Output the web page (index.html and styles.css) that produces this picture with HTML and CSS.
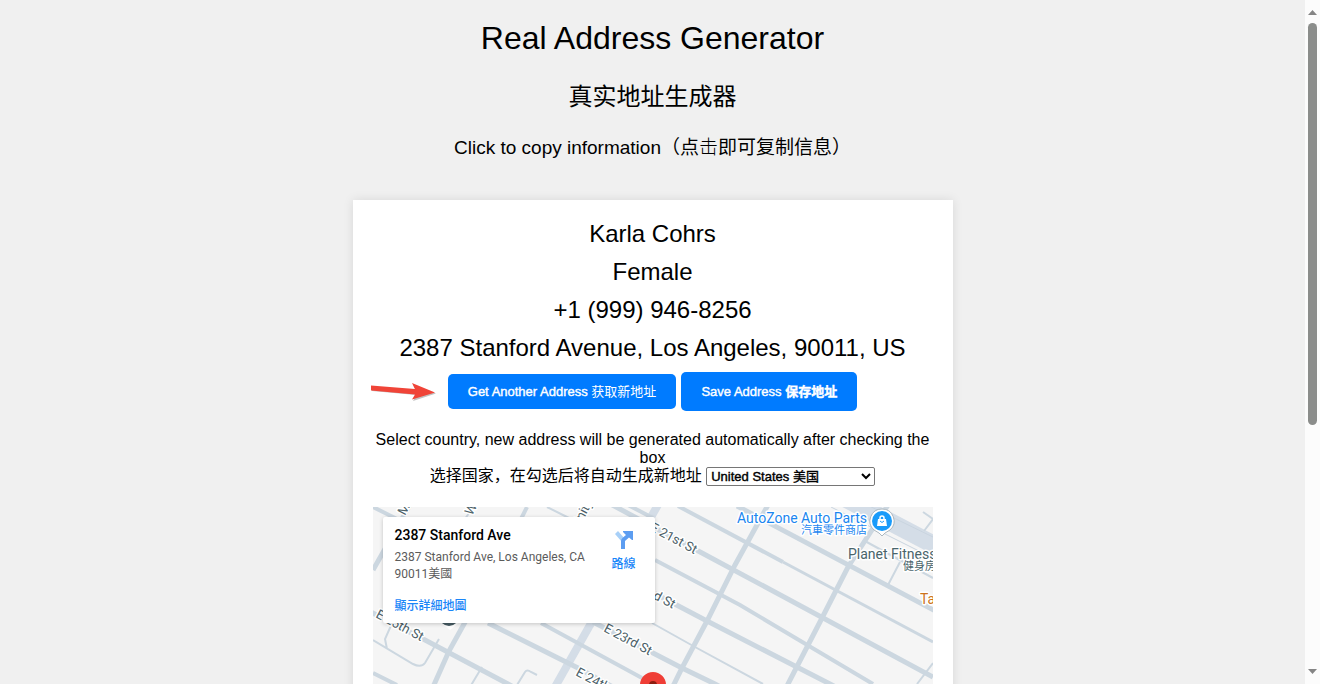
FILE: index.html
```html
<!DOCTYPE html>
<html lang="zh-CN">
<head>
<meta charset="utf-8">
<title>Real Address Generator</title>
<link rel="stylesheet" href="styles.css">
</head>
<body>
<main class="page">
  <h1 class="title">Real Address Generator</h1>
  <h2 class="subtitle">真实地址生成器</h2>
  <h3 class="hint">Click to copy information（点<span class="light">击</span>即可复制信息）</h3>
  <section class="card">
    <p class="info">Karla Cohrs</p>
    <p class="info">Female</p>
    <p class="info">+1 (999) 946-8256</p>
    <p class="info">2387 Stanford Avenue, Los Angeles, 90011, US</p>
    <div class="actions">
      <svg class="arrow" width="68" height="22" viewBox="0 0 68 22" aria-hidden="true">
        <path d="M2 6L46 10L43 4L66 12.500L43 20L46 14L2 10Z" fill="#999" opacity=".6"/>
        <path d="M1 4.500L45 8L42 2L65 11.500L42 18.500L45 13.500L1 9.500Z" fill="#f04438"/>
      </svg>
      <button class="btn" type="button">Get Another Address <span class="thin">获取新地址</span></button>
      <button class="btn btn-save" type="button">Save Address <b>保存地址</b></button>
    </div>
    <div class="country">
      <label for="country">Select country, new address will be generated automatically after checking the box<br>选择国家，在勾选后将自动生成新地址</label>
      <select id="country" class="select"><option>United States 美国</option></select>
    </div>
    <div class="map">
      <svg class="streets" width="560" height="240" viewBox="0 0 560 240">
        <g fill="none" stroke="#ccd7e0">
          <path stroke="#d4dde7" stroke-width="18" d="M462 -14L565 40"/>
          <path stroke="#c9d4df" stroke-width="1" d="M458 0L560 51M488 -5L560 30"/>
          <path stroke="#d4dde7" stroke-width="8" d="M286 -4L182 180L150 240"/>
          <path stroke-width="5" d="M364 -1L570 108M230 -7L329 46L560 170M220 54L334 114L457 177L570 237M220 115L309 161L342 177L460 240M115 116L205 161L350 240M-4 104L52 133L135 177L250 240"/>
          <path stroke-width="5" d="M395 -2L362 58L334 114L309 161L270 240M515 -2L475 60L449 111L415 177L384 240M96 108L76 144L60 180M0 63L38 -4"/>
          <path stroke-width="4" d="M305 -1L410 55M282 53L367 98L500 177M0 166L24 178M168 116L269 171M0 0L24 12M154 0L147 14M255 -2L280 11"/>
          <path stroke-width="3" d="M410 55L560 135"/>
          <path stroke-width="2" d="M279 116L322 140L390 177M527 55L515 78M490 33L560 71M560 156L544 177M550 5L560 12L551 24M0 133L40 157Q48 161 52 156L66 132M20 114L12 132L14 142M109 160L97 180M144 178L152 165Q154 162 158 165L164 168M174 0L196 11M100 0L92 12"/>
        </g>
        <g class="street-label">
          <text transform="translate(276 23) rotate(28)">E 21st St</text>
          <text transform="translate(251 76) rotate(28)">E 22nd St</text>
          <text transform="translate(230 124) rotate(28)">E 23rd St</text>
          <text transform="translate(202 168) rotate(28)">E 24th St</text>
          <text transform="translate(2 110) rotate(28)">E 25th St</text>
          <text transform="translate(32 9) rotate(-62)">Maple Ave</text>
          <text transform="translate(99 9) rotate(-62)">Wall St</text>
          <text transform="translate(203 27) rotate(-62)">Trinity St</text>
        </g>
        <path d="M67 115L77 123L87 115" fill="#fff"/><circle cx="76" cy="109" r="10" fill="#465b63"/>
        <g class="poi" text-anchor="end">
          <text x="494" y="16" fill="#1a86f0">AutoZone Auto Parts</text>
          <text x="494" y="27" class="poi-cjk" fill="#1a86f0">汽車零件商店</text>
        </g>
        <g class="poi">
          <text x="475" y="52" fill="#49646b">Planet Fitness</text>
          <text x="530" y="63" class="poi-cjk" fill="#49646b">健身房</text>
          <text x="547" y="97" fill="#cc731b">Tacos</text>
        </g>
        <path d="M509 2A12 12 0 0 1 517 23Q511 26 509 29Q507 26 501 23A12 12 0 0 1 509 2Z" fill="#fff" stroke="#aeb8bf" stroke-width="1"/>
        <circle cx="509" cy="14" r="10" fill="#1a9bfa"/>
        <path d="M505 12H513L514 19H504Z" fill="#fff"/>
        <path d="M507 12V11A2 2 0 0 1 511 11V12" fill="none" stroke="#fff" stroke-width="1.500"/>
        <path d="M507 14Q509 17 511 14" fill="none" stroke="#1a9bfa"/>
        <path d="M280 165A13 13 0 0 1 293 178C293 188 280 190 280 208C280 190 267 188 267 178A13 13 0 0 1 280 165Z" fill="#ef3e36"/>
        <circle cx="280" cy="178" r="4" fill="#8c1d10"/>
      </svg>
      <div class="place">
        <div class="place-text">
          <strong class="place-name">2387 Stanford Ave</strong>
          <p class="place-address">2387 Stanford Ave, Los Angeles, CA 90011美國</p>
          <a class="map-link" href="#">顯示詳細地圖</a>
        </div>
        <a class="directions" href="#">
          <svg width="20" height="20" viewBox="0 0 20 20" aria-hidden="true">
            <path d="M1 4L4 1L11 9L8 12Z" fill="#a8d0f8"/>
            <path d="M7 19V11Q7 9 9 7.500L12 5L9 2V1H19V10H18L15 7.500L11 11V19Z" fill="#5c9df1"/>
          </svg>
          <span>路線</span>
        </a>
      </div>
    </div>
  </section>
</main>
<div class="scrollbar" aria-hidden="true">
  <svg width="9" height="5" viewBox="0 0 9 5"><path d="M0 5L4.500 0L9 5Z" fill="#858585"/></svg>
  <div class="track"><div class="thumb"></div></div>
  <svg width="9" height="5" viewBox="0 0 9 5"><path d="M0 0L4.500 5L9 0Z" fill="#858585"/></svg>
</div>
</body>
</html>
```
FILE: styles.css
```css
* { box-sizing: border-box; }

body {
  margin: 0;
  display: flex;
  height: 100vh;
  overflow: hidden;
  background: #f0f0f0;
  color: #000;
  font-family: "Liberation Sans", "Noto Sans CJK SC", sans-serif;
  font-size: 16px;
  line-height: 18px;
}

.page {
  flex: 1;
  min-width: 0;
  padding: 20px;
  overflow: hidden;
  text-align: center;
}

.title, .subtitle, .hint, .info { margin: 0; font-weight: 400; }
.title { font-size: 32px; line-height: 36px; }
.subtitle { margin-top: 24px; font-size: 24px; line-height: 34px; }
.hint { margin-top: 20px; font-size: 19px; line-height: 28px; }
.light { font-weight: 300; }

.card {
  max-width: 600px;
  margin: 38px auto 20px;
  padding: 20px;
  background: #fff;
  box-shadow: 0 0 10px rgba(0, 0, 0, 0.1);
}

.info { margin-bottom: 10px; font-size: 24px; line-height: 28px; }

.actions {
  position: relative;
  display: flex;
  justify-content: center;
  align-items: center;
  gap: 5px;
}

.arrow { position: absolute; left: -3px; top: 9px; }

.btn {
  height: 35px;
  padding: 0 20px;
  border: 0;
  border-radius: 5px;
  background: #007bff;
  color: #fff;
  font: 400 13px/15px "Liberation Sans", "Noto Sans CJK SC", sans-serif;
  -webkit-text-stroke: 0.4px currentColor;
  white-space: nowrap;
}
.btn-save { height: 39px; }
.thin { -webkit-text-stroke: 0; }

.country { margin-top: 20px; line-height: 18px; }

.select {
  width: 169px;
  height: 19px;
  padding: 0;
  border: 1px solid #767676;
  border-radius: 2px;
  background: #fff;
  color: #000;
  font: 400 13px/15px "Liberation Sans", "Noto Sans CJK SC", sans-serif;
  -webkit-text-stroke: 0.4px currentColor;
  vertical-align: middle;
}

.map {
  position: relative;
  margin-top: 21px;
  overflow: hidden;
  background: #f5f5f5;
  font-family: Roboto, "Noto Sans CJK TC", sans-serif;
}
.streets { display: block; max-width: 100%; }
.street-label, .poi { paint-order: stroke; stroke: #fff; stroke-width: 3px; stroke-linejoin: round; }
.street-label { fill: #4c5f68; font-size: 13px; }
.poi { font-size: 14px; }
.poi-cjk { font-size: 11px; }

.place {
  position: absolute;
  left: 10px;
  top: 10px;
  display: flex;
  justify-content: space-between;
  width: 272px;
  padding: 9px 12px 8px;
  border-radius: 2px;
  background: #fff;
  box-shadow: 0 1px 4px rgba(0, 0, 0, 0.2);
  text-align: left;
}
.place-text { width: 200px; }
.place-name { display: block; font-size: 14px; font-weight: 500; line-height: 18px; }
.place-address { margin: 5px 0 15px; color: #5b5b5b; font-size: 12px; line-height: 17px; }
.map-link, .directions { color: #1a86f8; font-size: 12px; font-weight: 500; line-height: 17px; text-decoration: none; }
.map-link { display: block; }
.directions { display: flex; flex-direction: column; align-items: center; gap: 6px; width: 38px; padding-top: 4px; }

.scrollbar {
  flex: none;
  display: flex;
  flex-direction: column;
  align-items: center;
  width: 15px;
  padding: 10px 0;
  background: #fcfcfc;
}
.track { flex: 1; padding: 8px 0; }
.thumb { width: 9px; height: 63%; border-radius: 5px; background: #8b8d8b; }
```
